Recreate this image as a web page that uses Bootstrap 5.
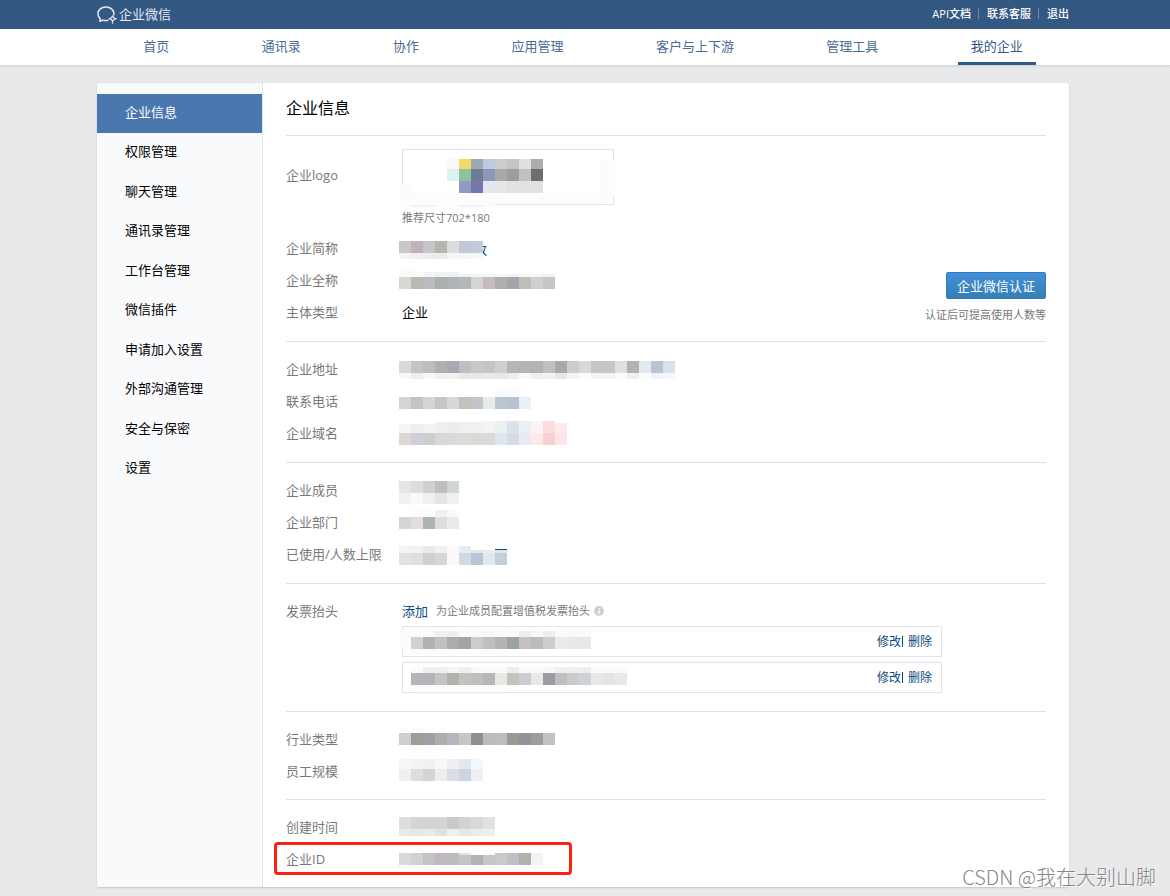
<!DOCTYPE html>
<html lang="zh-CN">
<head>
<meta charset="utf-8">
<meta name="viewport" content="width=device-width, initial-scale=1">
<title>企业微信 - 我的企业</title>
<link href="https://cdn.jsdelivr.net/npm/bootstrap@5.3.0/dist/css/bootstrap.min.css" rel="stylesheet">
<style>
  body { background: #e8e9eb; color: #000; font: 13px/20px "Open Sans", "Noto Sans CJK SC", sans-serif; }
  a { text-decoration: none; color: #0b4a7e; }
  .page { display: flow-root; }
  .shell { padding-right: 4px; }
  .inner { max-width: 972px; margin: 0 auto; }
  .topbar { background: #335983; height: 29px; padding-bottom: 1px; }
  .brand { color: #e3eaf2; gap: 2px; }
  .toplinks { font-size: 11px; font-weight: 500; }
  .toplinks a { color: #fff; }
  .toplinks a + a::before { content: ""; display: inline-block; width: 1px; height: 11px; margin: 0 8px 0 7px; background: #6f8cab; vertical-align: -1px; }
  .mainnav { background: #fff; height: 37px; border-bottom: 1px solid #d6d8da; box-shadow: 0 1px 2px rgba(0,0,0,.06); }
  .mainnav a { color: #4a6b95; height: 36px; line-height: 35px; padding: 0 13px; }
  .mainnav a.active { color: #335983; border-bottom: 3px solid #2d5985; }
  .panel { background: #fff; margin-top: 17px; margin-bottom: 9px; border-radius: 3px; box-shadow: 0 1px 2px rgba(0,0,0,.16); }
  .side { flex: 0 0 166px; background: #f9fafc; border-right: 1px dotted #cdd5dc; padding-top: 11px; border-radius: 3px 0 0 3px; }
  .side a { display: block; height: 39px; line-height: 37px; padding-left: 28px; color: #000; }
  .side a:nth-child(even) { height: 40px; }
  .side a.active { background: #4a77ad; color: #fff; }
  .content { padding: 0 23px; }
  .content h1 { font-size: 16px; font-weight: 400; line-height: 50px; margin: 0 0 2px; }
  .group { border-top: 1px solid #e1e2e4; padding: 11px 0 13px; }
  .group.pair { padding-bottom: 12px; }
  .item { min-height: 32px; line-height: 32px; }
  .item dt { flex: 0 0 116px; font-weight: 400; color: #787878; }
  .item dd { margin: 0; }
  .logo-item { padding-bottom: 3px; }
  .logo-item dt { padding-top: 12px; }
  .logo-item dd { padding-top: 2px; }
  .logo-box { width: 212px; height: 56px; border: 1px solid #e2e3e8; }
  .logo-box svg { position: absolute; left: -4px; top: -1px; }
  .hint { font-size: 11px; color: #787878; }
  .logo-item .hint { line-height: 26px; height: 24px; }
  .verify { gap: 7px; padding-bottom: 5px; }
  .verify .hint { line-height: 16px; }
  .btn-verify { height: 27px; padding: 0 10px; margin-bottom: 1px; font-size: 13px; line-height: 24px; color: #fff; border: 1px solid #2a7fc4; border-radius: 2px; background: linear-gradient(#448fd6, #357fb5); }
  .mosaic { display: block; height: 32px; margin-left: -3px; overflow: visible; }
  .invoice-head { height: 31px; }
  .invoices { gap: 5px; padding-bottom: 5px; }
  .invoice { max-width: 540px; height: 31px; line-height: 29px; font-size: 12px; border: 1px solid #e2e3e8; padding: 0 9px 0 0; }
  .invoice .mosaic { height: 29px; margin-left: -4px; }
  .invoice-wrap { flex: 0 1 540px; }
  .sep { width: 1px; height: 11px; background: #0b4a7e; margin: 0 5px 0 1px; }
  .marked::after { content: ""; position: absolute; left: -12px; top: -1px; width: 298px; height: 33px; border: 3px solid #fd1f14; border-radius: 4px; }
  .watermark { position: absolute; right: 14px; bottom: 5px; font: 20px/28px "Noto Sans CJK SC", sans-serif; font-weight: 300; color: #858688; text-shadow: 1px 1px 0 rgba(255,255,255,.7); pointer-events: none; }
</style>
</head>
<body>
<div class="page position-relative">
<header>
  <div class="topbar shell">
    <div class="inner h-100 d-flex justify-content-between align-items-center">
      <a class="brand d-flex align-items-center" href="#">
        <svg width="20" height="19" viewBox="0 0 20 19" fill="none" stroke="#e3eaf2" stroke-width="1.5" stroke-linejoin="round" aria-hidden="true">
          <path d="M11.5 15.2c-1.7.5-4 .5-5.800-.1L2.900 16.200l.4-2.500C1.700 12.300.9 10.600.9 8.800.9 4.900 4.500 1.900 8.900 1.900s8 3 8 6.600c0 .7-.1 1.300-.3 1.900"/>
          <path d="M15.600 10.900l1 1.700 1.900 1.200-1.900.9-1.100 1.900-.9-1.900-1.900-1 1.900-1.100z" stroke-width="1.200"/>
          <path d="M15.600 18h.1M19 13.800h.1M12.200 13.700h.1" stroke-linecap="round"/>
        </svg>
        <span>企业微信</span>
      </a>
      <nav class="toplinks"><a href="#">API文档</a><a href="#">联系客服</a><a href="#">退出</a></nav>
    </div>
  </div>
  <div class="mainnav shell">
    <nav class="inner d-flex justify-content-around">
      <a href="#">首页</a><a href="#">通讯录</a><a href="#">协作</a><a href="#">应用管理</a><a href="#">客户与上下游</a><a href="#">管理工具</a><a href="#" class="active" aria-current="page">我的企业</a>
    </nav>
  </div>
</header>

<div class="shell">
  <div class="inner panel d-flex">
    <nav class="side">
      <a href="#" class="active">企业信息</a>
      <a href="#">权限管理</a>
      <a href="#">聊天管理</a>
      <a href="#">通讯录管理</a>
      <a href="#">工作台管理</a>
      <a href="#">微信插件</a>
      <a href="#">申请加入设置</a>
      <a href="#">外部沟通管理</a>
      <a href="#">安全与保密</a>
      <a href="#">设置</a>
    </nav>
    <main class="content flex-grow-1">
      <h1>企业信息</h1>

      <section class="group d-flex justify-content-between align-items-end">
        <dl class="mb-0">
          <div class="item logo-item d-flex">
            <dt>企业logo</dt>
            <dd>
              <div class="logo-box position-relative">
                <svg class="mosaic-logo" width="216" height="60" shape-rendering="crispEdges" role="img" aria-label="企业logo">
                  <path fill="#fcfcfc" d="M0 35h12v9h189V12l11-1h4v33l-7 10-9 1H96v3H0z"/>
                  <path fill="#fff" d="M12 10h189v34H12z"/>
                  <path fill="#f3f3f3" d="M12 56h24v2H12zM60 56h24v2H60z"/>
                </svg>
              </div>
              <div class="hint">推荐尺寸702*180</div>
            </dd>
          </div>
          <div class="item d-flex"><dt>企业简称</dt><dd><svg class="mosaic" data-key="short" width="90"><text x="62" y="22" fill="#0b4a7e">修改</text></svg></dd></div>
          <div class="item d-flex"><dt>企业全称</dt><dd><svg class="mosaic" data-key="full" width="156"></svg></dd></div>
          <div class="item d-flex"><dt>主体类型</dt><dd>企业</dd></div>
        </dl>
        <div class="verify d-flex flex-column align-items-end">
          <button type="button" class="btn btn-verify">企业微信认证</button>
          <span class="hint">认证后可提高使用人数等</span>
        </div>
      </section>

      <dl class="group mb-0">
        <div class="item d-flex"><dt>企业地址</dt><dd><svg class="mosaic" data-key="address" width="276"></svg></dd></div>
        <div class="item d-flex"><dt>联系电话</dt><dd><svg class="mosaic" data-key="phone" width="132"></svg></dd></div>
        <div class="item d-flex"><dt>企业域名</dt><dd><svg class="mosaic" data-key="domain" width="168"></svg></dd></div>
      </dl>

      <dl class="group mb-0">
        <div class="item d-flex"><dt>企业成员</dt><dd><svg class="mosaic" data-key="members" width="60"></svg></dd></div>
        <div class="item d-flex"><dt>企业部门</dt><dd><svg class="mosaic" data-key="depts" width="60"></svg></dd></div>
        <div class="item d-flex"><dt>已使用/人数上限</dt><dd><svg class="mosaic" data-key="limit" width="108"></svg></dd></div>
      </dl>

      <dl class="group mb-0">
        <div class="item d-flex">
          <dt>发票抬头</dt>
          <dd class="invoice-wrap">
            <div class="invoice-head d-flex align-items-center">
              <a href="#">添加</a><span class="hint ms-2">为企业成员配置增值税发票抬头</span>
              <svg class="ms-1" width="10" height="10" viewBox="0 0 10 10" aria-hidden="true"><circle cx="5" cy="5" r="5" fill="#cfcfcf"/><path d="M5.600 2v1.200M5.300 4.200L4.700 8" stroke="#fff" stroke-width="1.300"/></svg>
            </div>
            <div class="invoices d-flex flex-column">
              <div class="invoice d-flex align-items-center">
                <svg class="mosaic me-auto" data-key="inv1" width="192"></svg>
                <a href="#">修改</a><span class="sep"></span><a href="#">删除</a>
              </div>
              <div class="invoice d-flex align-items-center">
                <svg class="mosaic me-auto" data-key="inv2" width="228"></svg>
                <a href="#">修改</a><span class="sep"></span><a href="#">删除</a>
              </div>
            </div>
          </dd>
        </div>
      </dl>

      <dl class="group pair mb-0">
        <div class="item d-flex"><dt>行业类型</dt><dd><svg class="mosaic" data-key="industry" width="156"></svg></dd></div>
        <div class="item d-flex"><dt>员工规模</dt><dd><svg class="mosaic" data-key="scale" width="84"></svg></dd></div>
      </dl>

      <dl class="group pair mb-0">
        <div class="item d-flex"><dt>创建时间</dt><dd><svg class="mosaic" data-key="created" width="96"></svg></dd></div>
        <div class="item d-flex position-relative marked"><dt>企业ID</dt><dd><svg class="mosaic" data-key="corpid" width="144"></svg></dd></div>
      </dl>
    </main>
  </div>
</div>
<div class="watermark">CSDN @我在大别山脚</div>
</div>

<script src="https://cdn.jsdelivr.net/npm/bootstrap@5.3.0/dist/js/bootstrap.bundle.min.js"></script>
<script>
// Masked values: each strip is [x, y, height, colours of 12px cells]; "-" leaves a cell empty.
const strips = {
  short: [[0,9,12,'c8c8c8 beb2bc c5c4ca b5b6af d9dddd c1c8d5 c3cdd8'],[0,21,6,'f4f4f4 f2eff1 eeecee ececec f7f7f7 f5f5f6 f7f8f8']],
  full: [[0,7,6,'fafafa fafafa'],[24,8,5,'f2f3f2 f2f2f2 f0f1f1'],[60,10,3,'f1f2f1 f5f5f5 f7f5f6 f4f4f4 f2f2f2 f5f5f5 f6f6f6 f1f2f1'],[0,13,12,'d9d8d6 b8bab2 bbbcbf abb0b1 b0b2b6 b0b8b8 d2d5d3 c7bbc1 b0aeb1 a5a6ab bebfb8 cfcfd3 c4c9c5']],
  address: [[0,8,12,'d8d8d6 c5c4be c1bbc0 aeb1a9 a5abb0 c5bcc3 c7c6ca c5c4be ced0cb b4b6bc b3b5b2 b3b4b2 bfc0c6 aaa9a7 cacdd1 d9d8d6 c3c6c4 c5c7c6 e1dedb afb3b8 e6e8ec b8c4d4 d8e1ea'],[0,20,6,'f8f8f8 eeeeee f9f9f9 f1f2ef f2f2f2 e8e8e8 e8e7e8 eaeaea e6e7e7 ecedee f8f9f8 efefef f0f1f1 e6e6e6 f5f5f5 fbfbfb f4f4f4 f2f4f2 fcfbfa eeeff0 fcfcfc edf3f9 f3f8fc']],
  phone: [[96,4,8,'fbfbfb fbfbfb'],[0,12,12,'d2d5d3 c4c5bf d3d5d4 c3c6c4 d7d9d8 c3c1ba c2c6c7 e7ebea bdc7d1 b6c4d2 eaf1f6']],
  domain: [[0,7,9,'f6f4f6 efeff2 f1f3f5'],[36,5,11,'eeefef ecedef f2eff1 f1f2f0'],[84,4,12,'f2f3f4 eceff0 d9e3eb e9f0f5 fdf1f3 fbdddf'],[156,6,10,'fbeaec'],[0,16,12,'dcd6d6 ceced9 cbcfd0 d5d7d9 d8dbd9 dedad8 d9d9d5 dadad8 dee6ee d4dde5 e7ebef fce9ea f9cfd1 fce5e7']],
  members: [[0,7,12,'e5e5e4 dededd cfd1d0 bdbebf d1d5d5'],[0,19,11,'f1f1f1 f9f9f8 eef0f2 e4e6e5 eff1f0']],
  depts: [[12,4,7,'fbfbfb fbfbfb f1f1f1 f8f9f9'],[0,11,12,'d3d6d4 e2dce1 b0b1b4 dddddd e9eaec']],
  limit: [[96,11,1,'0b4a7e'],[0,8,7,'f5f4f2 f1f2f4 eae9e7 f0f1f2 fbfbfb e7ecf0'],[72,12,3,'e1e6eb eaedef dce5ec'],[0,15,12,'e2e2e2 dedfdf d1d0d0 d5d6d7 fbf8f9 cfdae3 b9c4d8 e2e7eb c4cfda']],
  inv1: [[0,2,20,'fbfbfb'],[12,4,6,'fbfbfb fafafa edf0f0 edf0f0 fafafa fafafa f7f7f7 f9f9f9 fafafa ededed f7f7f7 ebedee fafafa fafafa fafafa'],[12,10,12,'d1d1d0 aeb2b5 c0c2bd abacae a3a4a3 cdcdc8 c0bfc2 b4b4b1 9ca3a3 c5c0c1 bdbcbb cacdd1 edeae8 e7e9ec e7e9e9'],[12,22,5,'fcfcfc fcfcfc fcfcfc fcfcfc fcfcfc fcfcfc fcfcfc fcfcfc']],
  inv2: [[12,4,6,'fbfbfb edefee efefee f5f5f5 edeeee f9f9f9 fafafa fafafa ebeeed fafafa fafafa f6f6f6 efefef f0f0f0 eceeef fafafa fafafa fafafa'],[12,10,12,'b8b3b6 b3b5ba c3c6c5 b1b2b0 c4c3be bfbfbc b4b6b9 e9e8e4 c2c4be cccdd0 e9e8e9 9d9da1 c0bec1 cbcbca ced1d5 e9e8e9 e6e4e3 e7eae9'],[12,22,5,'fcfcfc fcfcfc fcfcfc fcfcfc fcfcfc fcfcfc fcfcfc fcfcfc']],
  industry: [[12,4,6,'fbfbfb fcfcfc fcfcfc'],[0,10,12,'d0ced0 9c9e97 9f9fa6 acaeaa b7b5bf c5c7c0 8d9090 bbbbba bbc0bd 999a98 8f959a 9e9d9d c1c1c6'],[12,22,5,'fbfbfb fcfcfc fcfcfc - fcfcfc']],
  scale: [[0,4,10,'f5f6f6 f4f2f3 f0f2f1 f7f7f6 edeff3 e2e9ee f4f8fc'],[0,14,12,'eff1f0 dfdddc d4d4d8 ededee dadde5 cad5e0 edf1f6']],
  created: [[0,6,12,'dfdedc d4d4d7 d1d4d0 d2d5d4 cacaca d2d2d5 d8d8d6 e0e2e2'],[0,18,7,'eaeaea e7e7e7 e9eaea e1e1e1 efefef e6e8e7 ecedeb efefef']],
  corpid: [[0,10,12,'dad9d8 d1d1cf c3c3c1 bfb8c1 bdbbbc c5c4c4 b2b1b7 c5c7c3 cbcac8 bcc0c5 b0b0ae f2f3f6'],[60,10,2,'e3e3e3 ffffff fbfbfb']],
  logo: [[48,10,10,'f8fafa f3d967 9da9b3 becadf cccccd c5c5c6 e0e0e0 acacac'],[48,20,12,'def0f4 8ec197 6c7c96 8c98b3 a8a8a9 9c9c9d c1c1c2 6d6d6e'],[60,32,12,'9199c5 7377ae e2e7f0 e6e6e6 e1e1e1 e1e1e1 e1e1e1']]
};
function paint(svg, rows) {
  for (const [x, y, h, cells] of rows) {
    cells.split(' ').forEach((c, i) => {
      if (c === '-') return;
      const r = document.createElementNS('http://www.w3.org/2000/svg', 'rect');
      r.setAttribute('x', x + i * 12);
      r.setAttribute('y', y);
      r.setAttribute('width', 12);
      r.setAttribute('height', h);
      r.setAttribute('fill', '#' + c);
      svg.appendChild(r);
    });
  }
}
document.querySelectorAll('.mosaic').forEach(s => paint(s, strips[s.dataset.key]));
paint(document.querySelector('.mosaic-logo'), strips.logo);
</script>
</body>
</html>
